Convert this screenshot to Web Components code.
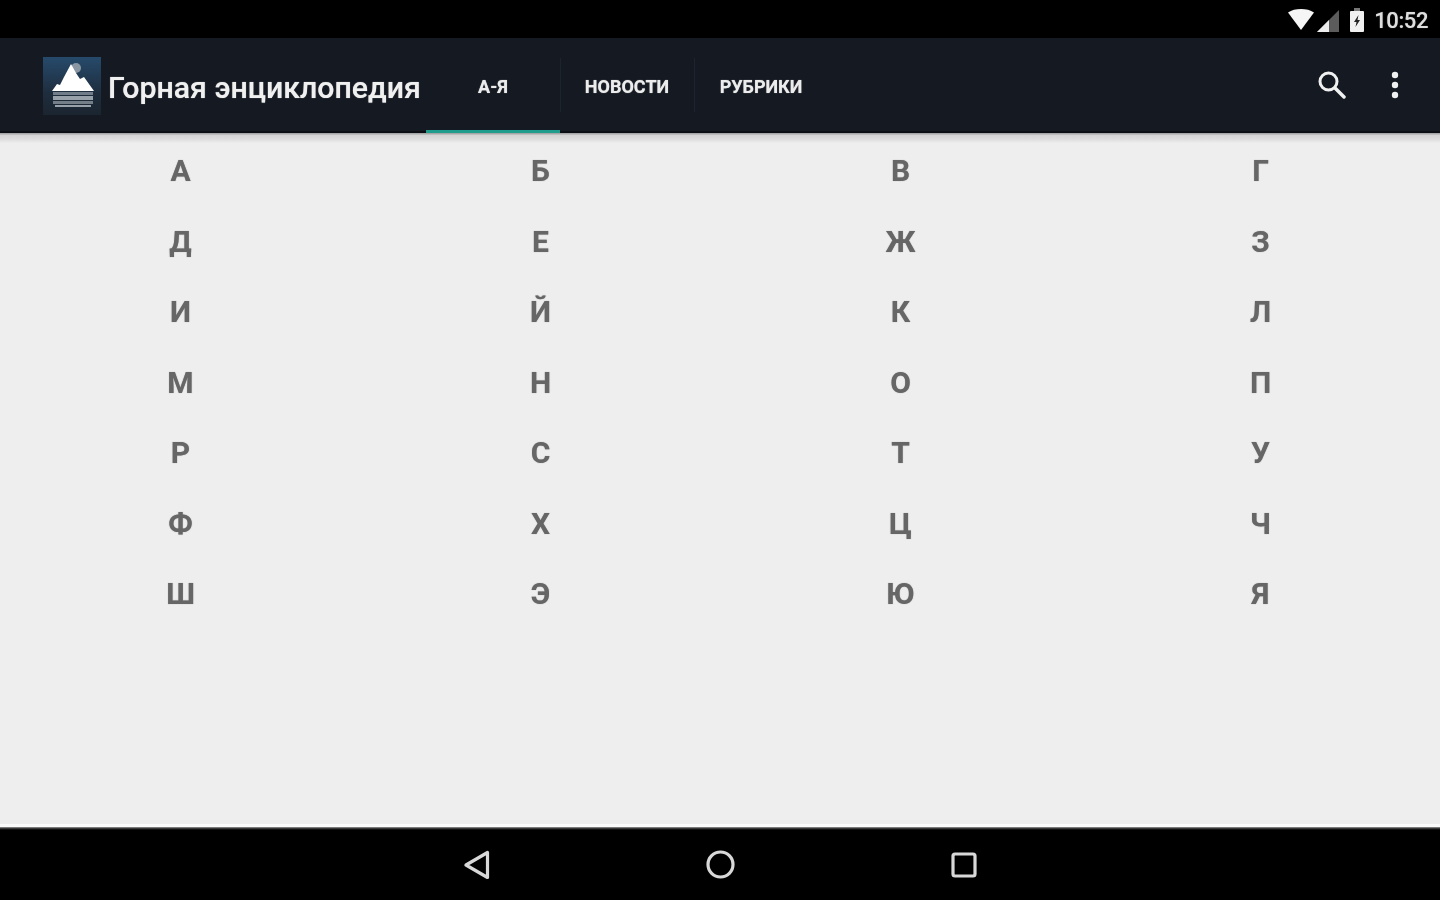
<!DOCTYPE html>
<html>
<head>
<meta charset="utf-8">
<title>Горная энциклопедия</title>
<style>
  html, body { margin: 0; padding: 0; height: 100%; background: #eeeeee; }
  body { font-family: Roboto, "Liberation Sans", sans-serif; }
  #app { display: flex; flex-direction: column; width: 1440px; height: 900px; overflow: hidden; }
</style>
</head>
<body>
<div id="app">
  <status-bar time="10:52"></status-bar>
  <action-bar title="Горная энциклопедия">
    <bar-tab active>А-Я</bar-tab>
    <bar-tab divider>НОВОСТИ</bar-tab>
    <bar-tab divider>РУБРИКИ</bar-tab>
  </action-bar>
  <letter-grid letters="А Б В Г Д Е Ж З И Й К Л М Н О П Р С Т У Ф Х Ц Ч Ш Э Ю Я"></letter-grid>
  <nav-bar></nav-bar>
</div>

<script>
class statusBar extends HTMLElement {
  constructor() {
    super();
    this.attachShadow({mode:"open"});
    this.shadowRoot.innerHTML = `
      <style>
        :host { display:flex; flex:none; height:38px; background:#000; align-items:center; justify-content:flex-end; color:#dedede; padding-right:12px; box-sizing:border-box; }
        svg { display:block; filter:blur(.7px); }
        .wifi { margin-right:3px; margin-top:1px; }
        .sig { margin-right:11px; margin-top:3px; }
        .bat { margin-right:10px; margin-top:1px; }
        span { font:500 22px/38px Roboto, sans-serif; letter-spacing:-0.4px; margin-top:4px; filter:blur(.7px); text-shadow:0 0 1px rgba(255,255,255,.5); }
      </style>
      <svg class="wifi" width="26" height="21" viewBox="0 0 26 21"><path d="M0 3.500C3.500 1 8 0 13 0S22.500 1 26 3.500L13 21z" fill="#f6f6f6"/></svg>
      <svg class="sig" width="22" height="22" viewBox="0 0 22 22"><path d="M0 22L22 0v22z" fill="#5c5c5c"/><path d="M0 22L12 10v12z" fill="#eeeeee"/></svg>
      <svg class="bat" width="14" height="24" viewBox="0 0 14 24"><path d="M4 0h6v3H4z" fill="#777"/><rect y="3" width="14" height="21" rx="1" fill="#f0f0f0"/><path d="M8.500 7L4 14H6.500L5.500 19L10 12H7.500z" fill="#222"/></svg>
      <span></span>
    `;
    this.shadowRoot.querySelector("span").textContent = this.getAttribute("time");
  }
}
window.customElements.define("status-bar", statusBar);

class actionBar extends HTMLElement {
  constructor() {
    super();
    this.attachShadow({mode:"open"});
    this.shadowRoot.innerHTML = `
      <style>
        :host { display:flex; flex:none; height:95px; background:#141922; align-items:stretch; position:relative; z-index:1; border-bottom:2px solid #0b0e13; box-sizing:border-box; }
        /* soft shadow under the bar, lies over the grid */
        :host::after { content:""; position:absolute; left:0; right:0; top:95px; height:10px; background:linear-gradient(#9a9a9a 0, #d4d4d4 25%, #dcdcdc 60%, #eeeeee 100%); }
        .logo { flex:none; width:58px; height:58px; margin:19px 7px 0 43px; background:linear-gradient(#264a6b,#1e2c3c 65%,#1b2530); display:block; }
        .title { flex:none; width:318px; font:500 30.300px/100px Roboto, "Liberation Sans", sans-serif; color:#f0f0f0; white-space:nowrap; filter:blur(.5px); text-shadow:0 0 1px rgba(255,255,255,.7); }
        .tabs { display:flex; flex:none; }
        .actions { margin-left:auto; display:flex; align-items:center; padding:0 41px 0 0; gap:45px; }
        svg { display:block; }
        .actions svg { filter:blur(.4px); }
      </style>
      <svg class="logo" viewBox="0 0 58 58">
        <defs><filter id="soft"><feGaussianBlur stdDeviation=".6"/></filter></defs>
        <g filter="url(#soft)">
          <circle cx="33" cy="11" r="5" fill="#8a97a3"/>
          <path d="M9 34L14 27L17 28L21 20L28 7L33 16L37 22L41 20L51 34z" fill="#fff"/>
          <rect x="10" y="35" width="40" height="3" fill="#717d88"/>
          <rect x="10" y="39" width="40" height="4" fill="#98a1a9"/>
          <rect x="10" y="44" width="40" height="3" fill="#737e88"/>
          <rect x="12" y="48" width="36" height="2" fill="#98a1a9"/>
        </g>
      </svg>
      <div class="title"></div>
      <div class="tabs"><slot></slot></div>
      <div class="actions">
        <svg width="28" height="28" viewBox="0 0 28 28" fill="none" stroke="#f0f0f0"><circle cx="10.500" cy="10.500" r="8.500" stroke-width="3"/><path d="M17 17L26 26" stroke-width="3.500" stroke-linecap="round"/></svg>
        <svg width="8" height="28" viewBox="0 0 8 28" fill="#f0f0f0"><circle cx="4" cy="4" r="3.200"/><circle cx="4" cy="14" r="3.200"/><circle cx="4" cy="24" r="3.200"/></svg>
      </div>
    `;
    this.shadowRoot.querySelector(".title").textContent = this.getAttribute("title");
    this.removeAttribute("title");
  }
}
window.customElements.define("action-bar", actionBar);

class barTab extends HTMLElement {
  constructor() {
    super();
    this.attachShadow({mode:"open"});
    this.shadowRoot.innerHTML = `
      <style>
        :host { display:flex; width:134px; height:95px; box-sizing:border-box; align-items:center; justify-content:center; font:700 18px/1 Roboto, "Liberation Sans", sans-serif; color:#ececec; position:relative; padding-top:2px; filter:blur(.5px); text-shadow:0 0 1px rgba(255,255,255,.7); }
        :host([active])::after { content:""; position:absolute; left:0; right:0; bottom:-1px; height:4px; background:#1f9c8c; }
        :host([divider])::before { content:""; position:absolute; left:0; top:20px; height:54px; width:1px; background:#1e242e; }
      </style>
      <slot></slot>
    `;
  }
}
window.customElements.define("bar-tab", barTab);

class letterGrid extends HTMLElement {
  constructor() {
    super();
    this.attachShadow({mode:"open"});
    const letters = this.getAttribute("letters").split(" ");
    this.shadowRoot.innerHTML = `
      <style>
        :host { display:grid; flex:1; grid-template-columns:repeat(4, 360px); grid-auto-rows:70.500px; align-content:start; background:#eeeeee; padding-top:3px; border-bottom:3px solid #fbfbfb; box-sizing:border-box; }
        div { display:flex; align-items:center; justify-content:center; font:700 30px/1 Roboto, "Liberation Sans", sans-serif; color:#666; padding-left:1px; filter:blur(.7px); text-shadow:0 0 1px rgba(90,90,90,.6); }
      </style>
      ${
        letters.map((o) => {
          return `<div>${o}</div>`
        }).join('')
      }
    `;
  }
}
window.customElements.define("letter-grid", letterGrid);

class navBar extends HTMLElement {
  constructor() {
    super();
    this.attachShadow({mode:"open"});
    this.shadowRoot.innerHTML = `
      <style>
        :host { display:flex; flex:none; height:73px; background:#000; box-sizing:border-box; padding-top:2px; align-items:center; justify-content:center; gap:216px; position:relative; }
        :host::before { content:""; position:absolute; left:0; right:0; top:0; height:3px; background:linear-gradient(#9c9c9c,#3a3a3a,#000); }
        svg { display:block; fill:none; stroke:#d8d8d8; stroke-width:3.200; stroke-linejoin:round; filter:blur(.4px); }
      </style>
      <svg width="26" height="30" viewBox="0 0 26 30"><path d="M23.500 2.500V27.500L2 15z"/></svg>
      <svg width="29" height="29" viewBox="0 0 29 29"><circle cx="14.500" cy="14.500" r="12.500"/></svg>
      <svg width="26" height="26" viewBox="0 0 26 26"><rect x="2" y="2" width="22" height="22" rx="2"/></svg>
    `;
  }
}
window.customElements.define("nav-bar", navBar);
</script>
</body>
</html>
